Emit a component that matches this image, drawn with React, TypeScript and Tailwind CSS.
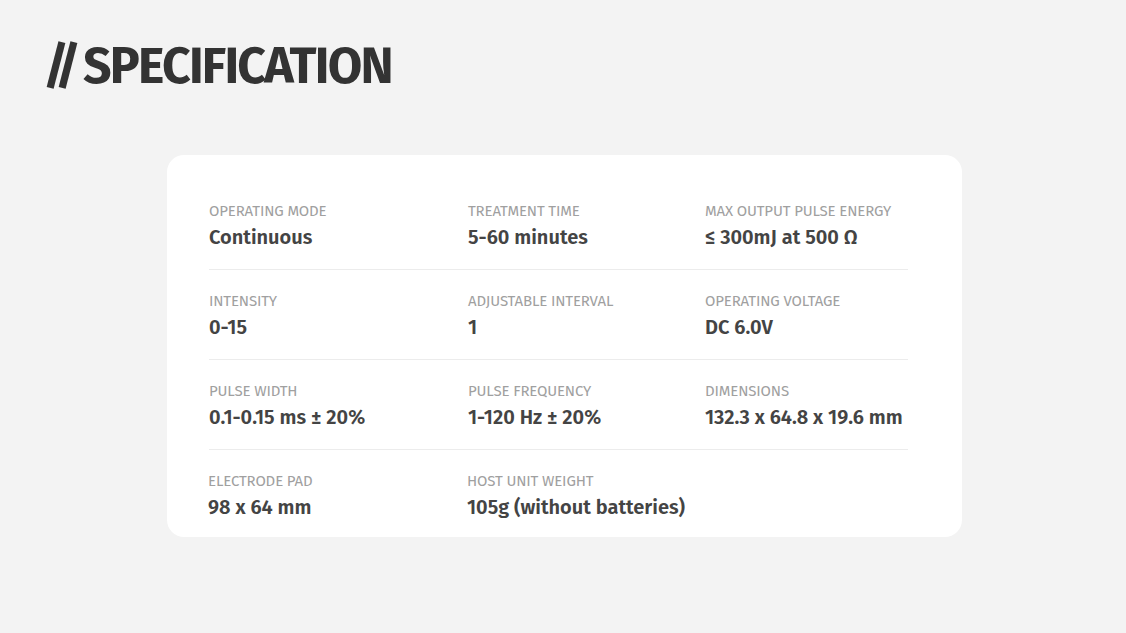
import React from 'react';

type Spec = { label: string; value: string };

const rows: Spec[][] = [
  [
    { label: 'OPERATING MODE', value: 'Continuous' },
    { label: 'TREATMENT TIME', value: '5-60 minutes' },
    { label: 'MAX OUTPUT PULSE ENERGY', value: '≤ 300mJ at 500 Ω' },
  ],
  [
    { label: 'INTENSITY', value: '0-15' },
    { label: 'ADJUSTABLE INTERVAL', value: '1' },
    { label: 'OPERATING VOLTAGE', value: 'DC 6.0V' },
  ],
  [
    { label: 'PULSE WIDTH', value: '0.1-0.15 ms ± 20%' },
    { label: 'PULSE FREQUENCY', value: '1-120 Hz ± 20%' },
    { label: 'DIMENSIONS', value: '132.3 x 64.8 x 19.6 mm' },
  ],
  [
    { label: 'ELECTRODE PAD', value: '98 x 64 mm' },
    { label: 'HOST UNIT WEIGHT', value: '105g (without batteries)' },
  ],
];

const App: React.FC = () => {
  return (
    <div
      className="min-h-screen w-full bg-[#f3f3f3] text-[#333]"
      style={{ fontFamily: '"Fira Sans", "Open Sans", "Noto Sans", sans-serif' }}
    >
      <div className="px-[43px] pt-[36px]">
        <h1 className="flex items-baseline text-[50px] font-bold leading-[60px] text-[#333]">
          <span className="tracking-[-8px]">//</span>
          <span className="ml-[10px] tracking-[-1.75px]">SPECIFICATION</span>
        </h1>
      </div>

      <div className="mt-[59px] ml-[167px] w-[795px] rounded-[17px] bg-white px-[42px] pt-[25px] pb-[17px]">
        <div className="w-[699px]">
          {rows.map((row, i) => (
            <div
              key={i}
              className={
                i < rows.length - 1
                  ? 'grid grid-cols-[259px_237px_1fr] border-b border-[#ececec] pt-[21px] pb-[19px]'
                  : 'grid grid-cols-[259px_237px_1fr] pt-[21px] -ml-px'
              }
            >
              {row.map((s) => (
                <div key={s.label} className="flex flex-col">
                  <span className="text-[15px] font-normal leading-[20px] tracking-[-0.15px] text-[#a0a0a0]">
                    {s.label}
                  </span>
                  <span className="mt-[3px] text-[20px] font-semibold leading-[26px] text-[#444]">
                    {s.value}
                  </span>
                </div>
              ))}
            </div>
          ))}
        </div>
      </div>
    </div>
  );
};

export default App;
